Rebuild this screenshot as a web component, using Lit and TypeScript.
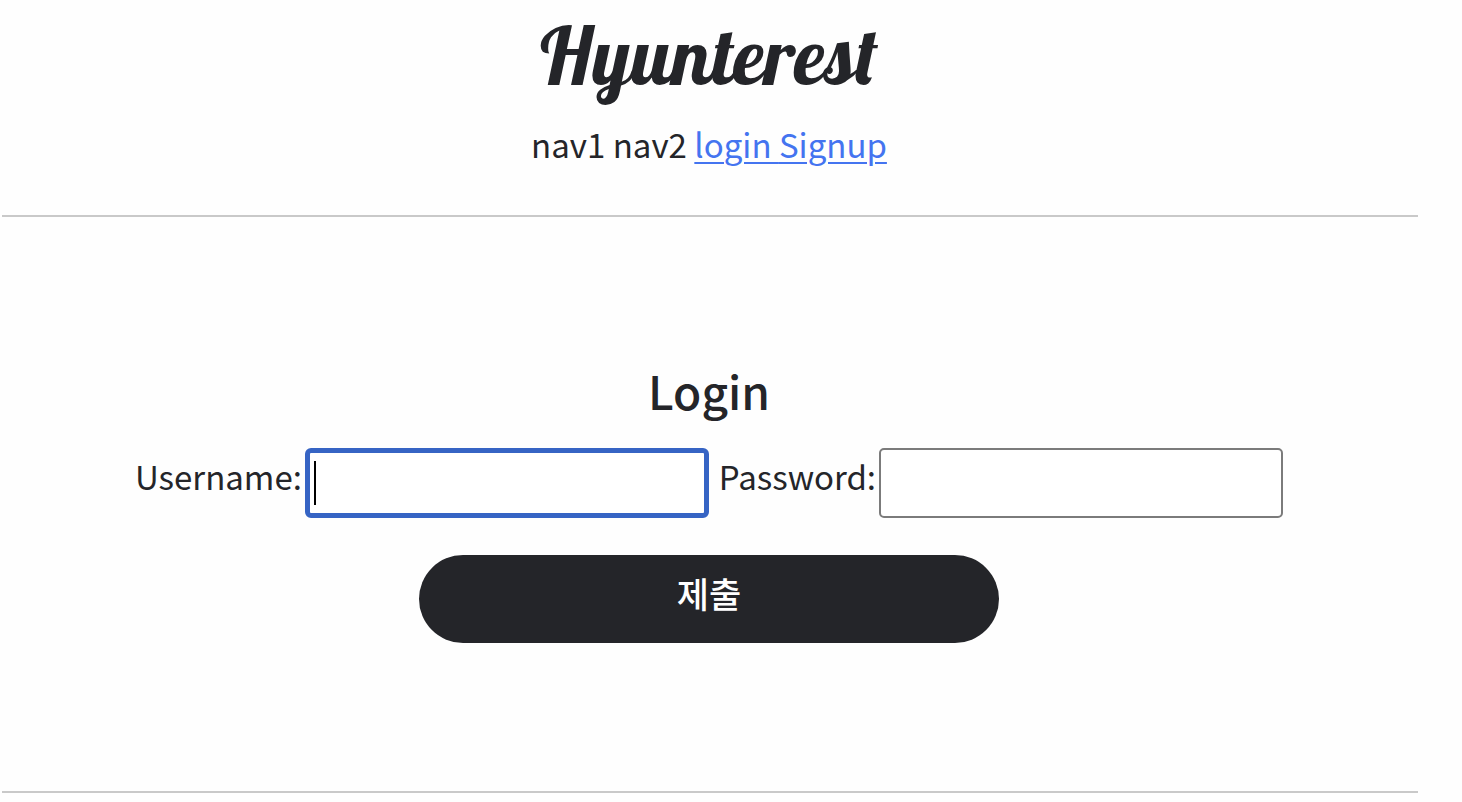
import { LitElement, html, css } from "lit";
import { customElement } from "lit/decorators.js";

@customElement("app-root")
export class AppRoot extends LitElement {
  static styles = css`
    :host {
      display: block;
      min-height: 100vh;
      box-sizing: border-box;
      padding: 0 44px 8px 2px;
      background: #fefefe;
      color: #242529;
      font-family: "Noto Sans CJK KR", sans-serif;
      font-size: 33px;
      line-height: 48px;
    }
    .header {
      display: flex;
      flex-direction: column;
      align-items: center;
      padding: 9px 2px 47px 0;
      border-bottom: 2px solid #c9c9c9;
    }
    .brand {
      margin: 0 0 19px;
      font-family: Lobster, "Liberation Serif", serif;
      font-size: 80px;
      font-weight: 500;
      line-height: 92px;
    }
    .link {
      color: #4474f0;
      text-decoration: underline;
      text-decoration-thickness: 2px;
      text-underline-offset: 4px;
    }
    .main {
      padding: 136px 2px 148px 0;
      border-bottom: 2px solid #c9c9c9;
    }
    .title {
      margin: 0 0 21px;
      font-size: 46px;
      font-weight: 500;
      line-height: 74px;
      text-align: center;
    }
    .form {
      display: flex;
      flex-direction: column;
      align-items: center;
      gap: 37px;
    }
    .fields {
      display: flex;
      flex-wrap: wrap;
      justify-content: center;
      gap: 10px;
    }
    .field {
      display: flex;
      align-items: center;
      gap: 3px;
    }
    .label {
      padding-bottom: 14px;
    }
    .input {
      box-sizing: border-box;
      width: 404px;
      height: 70px;
      padding: 4px 8px;
      border: 2px solid #7b7b7b;
      border-radius: 5px;
      outline: none;
      background: #ffffff;
      color: inherit;
      font: inherit;
    }
    .active {
      border: 5px solid #3664c4;
      border-radius: 6px;
      caret-color: transparent;
      background: linear-gradient(#000, #000) 4px center / 2px 44px no-repeat #ffffff;
    }
    .submit {
      width: 41%;
      height: 88px;
      padding: 0 0 12px;
      border: 0;
      border-radius: 44px;
      background: #242529;
      color: #ffffff;
      font: inherit;
      font-size: 35px;
      font-weight: 500;
    }
  `;

  render() {
    return html`
      <header class="header">
        <h1 class="brand">Hyunterest</h1>
        <nav>
          <span>nav1</span> <span>nav2</span>
          <a class="link" href="#login">login </a><a class="link" href="#signup">Signup</a>
        </nav>
      </header>
      <main class="main">
        <h2 class="title">Login</h2>
        <form class="form" @submit=${(e: Event) => e.preventDefault()}>
          <div class="fields">
            <div class="field">
              <label class="label" for="username">Username:</label>
              <input class="input active" id="username" type="text" name="username" />
            </div>
            <div class="field">
              <label class="label" for="password">Password:</label>
              <input class="input" id="password" type="password" name="password" />
            </div>
          </div>
          <button class="submit" type="submit">제출</button>
        </form>
      </main>
    `;
  }
}
